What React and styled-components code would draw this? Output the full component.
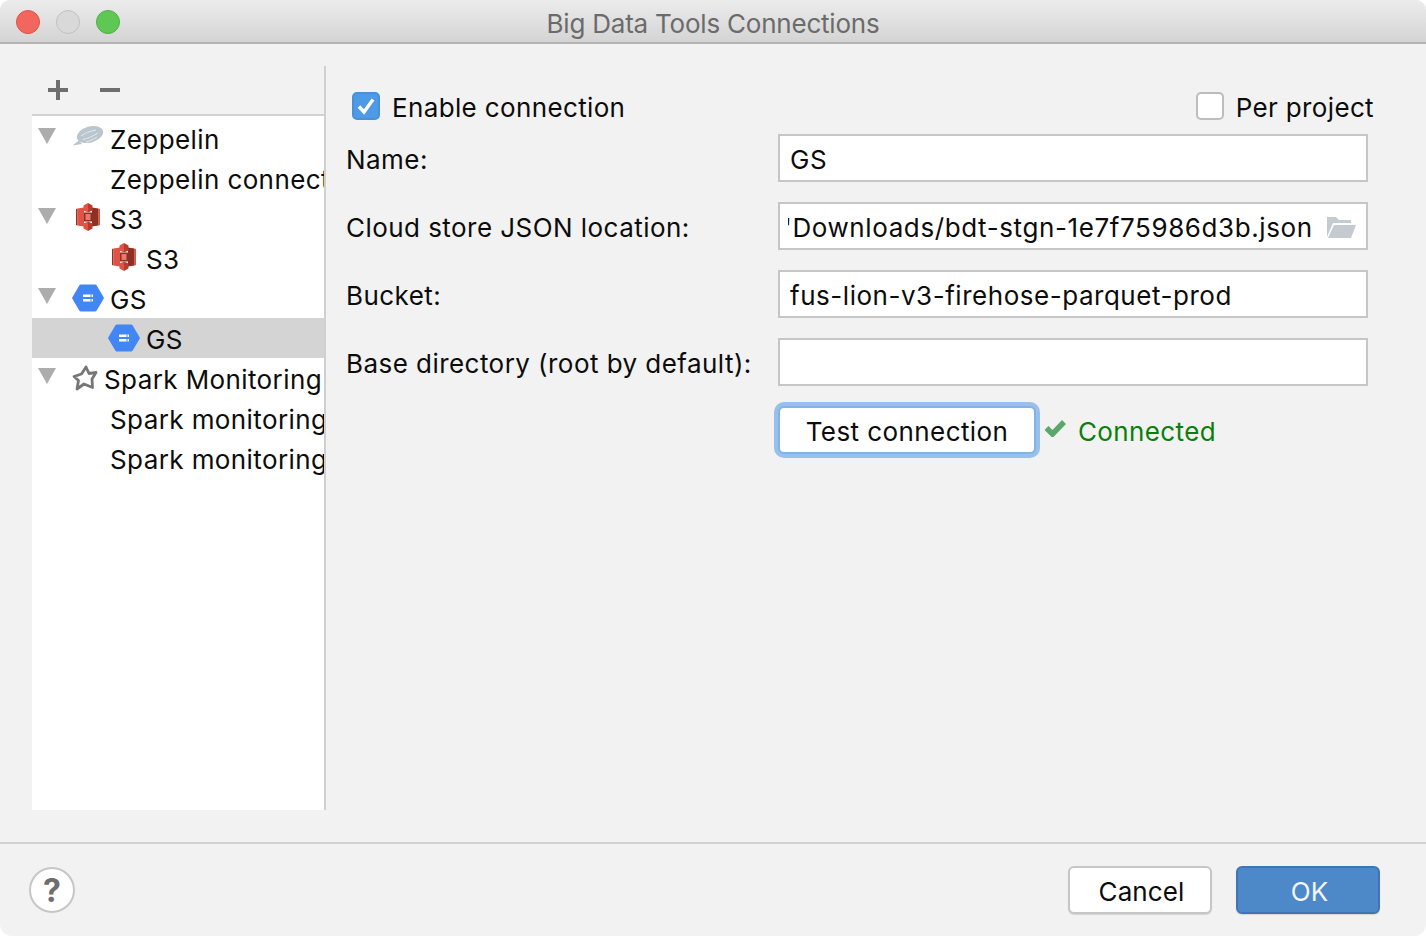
import React from "react";
import styled, { createGlobalStyle } from "styled-components";

const Global = createGlobalStyle`
html, body { margin: 0; padding: 0; background: #fff; }
body { font-family: Inter, "Liberation Sans", sans-serif; font-size: 26px; color: #0c0c0c; }
`;

const Dialog = styled.div`
  width: 1426px;
  height: 936px;
  background: #f2f2f2;
  border-radius: 10px 10px 12px 12px;
  overflow: hidden;
  display: flex;
  flex-direction: column;
`;
const TitleBar = styled.div`
  position: relative;
  height: 42px;
  flex: none;
  display: flex;
  align-items: center;
  justify-content: center;
  background: linear-gradient(#ececec, #d4d4d4);
  border-bottom: 2px solid #b4b4b4;
  color: #6b6b6b;
  letter-spacing: -0.22px;
`;
const TitleText = styled.span`
  margin-top: 4px;
`;
const Lights = styled.div`
  position: absolute;
  left: 16px;
  top: 10px;
  display: flex;
  gap: 16px;
`;
const Light = styled.span`
  width: 24px;
  height: 24px;
  box-sizing: border-box;
  border-radius: 50%;
  background: ${(p) => p.$fill};
  border: 1px solid ${(p) => p.$line};
`;
const Main = styled.div`
  flex: 1;
  display: flex;
  align-items: flex-start;
  padding: 22px 0 0 32px;
`;
const Side = styled.div`
  width: 294px;
  height: 744px;
  box-sizing: border-box;
  flex: none;
  display: flex;
  flex-direction: column;
  border-right: 2px solid #d0d0d0;
`;
const Tools = styled.div`
  height: 50px;
  flex: none;
  box-sizing: border-box;
  display: flex;
  align-items: center;
  gap: 32px;
  padding: 0 0 0 16px;
  border-bottom: 2px solid #d2d2d2;
`;
const Tree = styled.div`
  flex: 1;
  background: #fff;
  padding-top: 2px;
  overflow: hidden;
`;
const Row = styled.div`
  height: 40px;
  box-sizing: border-box;
  display: flex;
  align-items: center;
  padding-left: ${(p) => p.$indent}px;
  background: ${(p) => (p.$selected ? "#d4d4d4" : "transparent")};
  white-space: nowrap;
  overflow: hidden;
`;
const Arrow = styled.span`
  flex: none;
  width: 0;
  height: 0;
  margin: -4px 16px 0 0;
  border-left: 9px solid transparent;
  border-right: 9px solid transparent;
  border-top: 16px solid #adadad;
`;
const IconBox = styled.span`
  flex: none;
  display: flex;
  justify-content: center;
  align-items: center;
  width: ${(p) => p.$w || 32}px;
  margin-right: 6px;
`;
const RowText = styled.span`
  letter-spacing: 0.4px;
  margin-top: 2px;
`;
const Content = styled.div`
  width: 1028px;
  margin-left: 20px;
  padding-top: 26px;
`;
const TopRow = styled.div`
  display: flex;
  justify-content: space-between;
  height: 28px;
  padding-left: 6px;
  margin-bottom: 14px;
`;
const CheckLabel = styled.div`
  display: flex;
  align-items: center;
  gap: 12px;
  letter-spacing: 0.36px;
`;
const LabelText = styled.span`
  margin-top: 2px;
`;
const CheckBox = styled.span`
  width: 28px;
  height: 28px;
  box-sizing: border-box;
  border-radius: 5px;
  display: flex;
  align-items: center;
  justify-content: center;
  background: ${(p) => (p.$on ? "#4d9be6" : "#fff")};
  border: 2px solid ${(p) => (p.$on ? "#4a90d9" : "#bdbdbd")};
`;
const Form = styled.div`
  display: grid;
  grid-template-columns: 432px 590px;
  grid-auto-rows: 48px;
  row-gap: 20px;
  align-items: center;
`;
const Label = styled.div`
  letter-spacing: 0.45px;
  margin-top: 2px;
`;
const Field = styled.div`
  height: 48px;
  box-sizing: border-box;
  display: flex;
  align-items: center;
  justify-content: space-between;
  padding: 2px 10px 0 10px;
  background: #fff;
  border: 2px solid #c6c6c6;
  letter-spacing: 0.53px;
  white-space: nowrap;
`;
const ClippedValue = styled.div`
  flex: 1;
  overflow: hidden;
  margin-left: -2px;
  text-indent: -4px;
  letter-spacing: 0.6px;
`;
const TestRow = styled.div`
  display: flex;
  align-items: center;
  margin: 16px 0 0 428px;
`;
const TestButton = styled.button`
  width: 258px;
  height: 48px;
  margin: 4px;
  padding: 2px 0 0;
  box-sizing: border-box;
  font: inherit;
  color: inherit;
  letter-spacing: 0.42px;
  background: #fff;
  border: 2px solid #84b2e4;
  border-radius: 6px;
  box-shadow: 0 0 0 4px #97c0ec;
`;
const Status = styled.div`
  display: flex;
  align-items: center;
  gap: 12px;
  margin-left: 4px;
  padding-top: 2px;
  color: #0a800a;
  letter-spacing: 0.38px;
`;
const StatusTick = styled.span`
  display: flex;
  margin-top: -6px;
`;
const Footer = styled.div`
  height: 94px;
  flex: none;
  box-sizing: border-box;
  border-top: 2px solid #d2d2d2;
  display: flex;
  align-items: center;
  justify-content: space-between;
  padding: 0 46px 0 29px;
`;
const Help = styled.div`
  width: 46px;
  height: 46px;
  box-sizing: border-box;
  border-radius: 50%;
  background: #fff;
  border: 2px solid #c6c6c6;
  color: #6e6e6e;
  font-weight: 700;
  font-size: 32px;
  display: flex;
  align-items: center;
  justify-content: center;
`;
const Actions = styled.div`
  display: flex;
  gap: 24px;
`;
const Button = styled.button`
  width: 144px;
  height: 48px;
  padding: 2px 0 0 3px;
  box-sizing: border-box;
  font: inherit;
  letter-spacing: 0.1px;
  border-radius: 6px;
  color: ${(p) => (p.$primary ? "#f2f6fb" : "#0c0c0c")};
  background: ${(p) => (p.$primary ? "#4d89c9" : "#fff")};
  border: 2px solid ${(p) => (p.$primary ? "#3f75b5" : "#c6c6c6")};
  box-shadow: 0 1px 1px rgba(0, 0, 0, 0.12);
`;

const Plus = () => (
  <svg width="20" height="20" viewBox="0 0 20 20">
    <path d="M8 0h4v8h8v4h-8v8H8v-8H0V8h8z" fill="#6e6e6e" />
  </svg>
);
const Minus = () => (
  <svg width="20" height="20" viewBox="0 0 20 20">
    <rect x="0" y="8" width="20" height="4" fill="#6e6e6e" />
  </svg>
);
const Zeppelin = () => (
  <svg width="32" height="22" viewBox="0 0 32 22" style={{ marginTop: -4 }}>
    <ellipse cx="18" cy="9.500" rx="13.500" ry="8" transform="rotate(-16 18 9.500)" fill="#b9c6ce" />
    <path d="M0.500 20.500L7 15.500l3 3.500z" fill="#b9c6ce" />
    <path d="M9 11c4-3 9-5 15-6M11 14.500c5-1 10-3.500 15-6.500M14 17c4-1 8-3 11-5" stroke="#e4eaee" strokeWidth="1" fill="none" />
  </svg>
);
const Bucket = () => (
  <svg width="24" height="28" viewBox="0 0 24 28" style={{ marginTop: -2 }}>
    <path d="M0 6l1.500-.5v17L0 22z" fill="#8c3123" />
    <path d="M1.500 5.500L8 4.500v19l-6.500-1z" fill="#e05243" />
    <path d="M24 6l-1.500-.5v17l1.500-.5z" fill="#e05243" />
    <path d="M22.500 5.500L16 4.500v19l6.500-1z" fill="#8c3123" />
    <path d="M12 0L7.500 2.500v5L12 9.500z" fill="#e05243" />
    <path d="M12 0l4.500 2.500v5L12 9.500z" fill="#b83c2e" />
    <path d="M12 18.500l-4.500 2v5L12 28z" fill="#e05243" />
    <path d="M12 18.500l4.500 2v5L12 28z" fill="#b83c2e" />
    <rect x="8" y="9.500" width="8" height="9" fill="#8c3123" />
    <rect x="9.500" y="11" width="5" height="6" fill="#e8796c" />
  </svg>
);
const Cloud = () => (
  <svg width="32" height="28" viewBox="0 0 32 28">
    <path d="M9 0.500h14a2 2 0 0 1 1.700 1L31.500 13a2 2 0 0 1 0 2l-6.800 11.500a2 2 0 0 1-1.700 1H9a2 2 0 0 1-1.700-1L0.500 15a2 2 0 0 1 0-2L7.300 1.500a2 2 0 0 1 1.700-1z" fill="#4285f4" />
    <rect x="11" y="10.500" width="10" height="2.500" fill="#fff" />
    <rect x="11" y="15" width="10" height="2.500" fill="#fff" />
    <rect x="18.500" y="10.500" width="1" height="2.500" fill="#4285f4" />
    <rect x="18.500" y="15" width="1" height="2.500" fill="#4285f4" />
  </svg>
);
const Star = () => (
  <svg width="26" height="26" viewBox="0 0 26 26">
    <path d="M14 2l3 6.500 7-1-4 6.500.5 8.500-8.500-3.500-7 5 1.500-8.500L2 11.500l7.500-2.500z" fill="none" stroke="#767676" strokeWidth="2.800" strokeLinejoin="round" />
  </svg>
);
const BoxTick = () => (
  <svg width="18" height="18" viewBox="0 0 18 18">
    <path d="M2 9.500l5 5.500L16 2.500" fill="none" stroke="#fff" strokeWidth="3.400" />
  </svg>
);
const Tick = () => (
  <svg width="22" height="18" viewBox="0 0 22 18">
    <path d="M2.500 9l6 6L20 3" fill="none" stroke="#59a869" strokeWidth="5.500" />
  </svg>
);
const Folder = () => (
  <svg width="30" height="24" viewBox="0 0 30 24">
    <path d="M1 22V2h9l3 3h12v3H7z" fill="#c3cbd1" />
    <path d="M8 10h22l-5 13H2z" fill="#c3cbd1" />
  </svg>
);

const tree = [
  { kind: "group", text: "Zeppelin", Icon: Zeppelin },
  { kind: "leaf", text: "Zeppelin connection" },
  { kind: "group", text: "S3", Icon: Bucket },
  { kind: "child", text: "S3", Icon: Bucket },
  { kind: "group", text: "GS", Icon: Cloud },
  { kind: "child", text: "GS", Icon: Cloud, selected: true },
  { kind: "group", text: "Spark Monitoring", Icon: Star, w: 26 },
  { kind: "leaf", text: "Spark monitoring connection" },
  { kind: "leaf", text: "Spark monitoring connection" },
];
const indents = { group: 6, child: 76, leaf: 78 };

export default function App() {
  return (
    <>
      <Global />
      <Dialog>
        <TitleBar>
          <Lights>
            <Light $fill="#f1675d" $line="#df5248" />
            <Light $fill="#d9d9d9" $line="#c0c0c0" />
            <Light $fill="#5fc854" $line="#4fae46" />
          </Lights>
          <TitleText>Big Data Tools Connections</TitleText>
        </TitleBar>
        <Main>
          <Side>
            <Tools>
              <Plus />
              <Minus />
            </Tools>
            <Tree>
              {tree.map((r, i) => (
                <Row key={i} $indent={indents[r.kind]} $selected={r.selected}>
                  {r.kind === "group" && <Arrow />}
                  {r.Icon && (
                    <IconBox $w={r.w}>
                      <r.Icon />
                    </IconBox>
                  )}
                  <RowText>{r.text}</RowText>
                </Row>
              ))}
            </Tree>
          </Side>
          <Content>
            <TopRow>
              <CheckLabel>
                <CheckBox $on>
                  <BoxTick />
                </CheckBox>
                <LabelText>Enable connection</LabelText>
              </CheckLabel>
              <CheckLabel>
                <CheckBox />
                <LabelText>Per project</LabelText>
              </CheckLabel>
            </TopRow>
            <Form>
              <Label>Name:</Label>
              <Field>GS</Field>
              <Label>Cloud store JSON location:</Label>
              <Field>
                <ClippedValue>'Downloads/bdt-stgn-1e7f75986d3b.json</ClippedValue>
                <Folder />
              </Field>
              <Label>Bucket:</Label>
              <Field>fus-lion-v3-firehose-parquet-prod</Field>
              <Label>Base directory (root by default):</Label>
              <Field />
            </Form>
            <TestRow>
              <TestButton>Test connection</TestButton>
              <Status>
                <StatusTick>
                  <Tick />
                </StatusTick>
                Connected
              </Status>
            </TestRow>
          </Content>
        </Main>
        <Footer>
          <Help>?</Help>
          <Actions>
            <Button>Cancel</Button>
            <Button $primary>OK</Button>
          </Actions>
        </Footer>
      </Dialog>
    </>
  );
}
